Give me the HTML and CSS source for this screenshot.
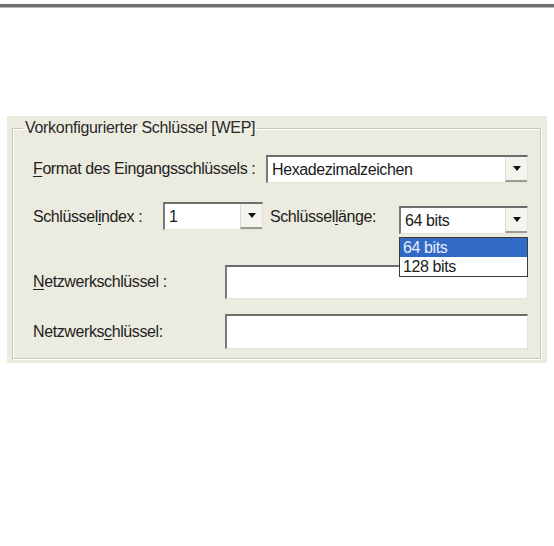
FILE: index.html
```html
<!DOCTYPE html>
<html>
<head>
    <meta charset="UTF-8">
    <title>WEP-Schlüssel</title>
    <link rel="stylesheet" href="styles.css">
</head>
<body>
    <div class="topline"></div>
    <div class="panel">
        <fieldset class="group">
            <legend>Vorkonfigurierter Schlüssel [WEP]</legend>

            <div class="row row-format">
                <label class="lbl lbl-format"><u>F</u>ormat des Eingangsschlüssels :</label>
                <div class="combo combo-format">
                    <span class="val">Hexadezimalzeichen</span>
                    <span class="arrow"></span>
                </div>
            </div>

            <div class="row row-keys">
                <label class="lbl lbl-index">Schlüssel<u>i</u>ndex :</label>
                <div class="combo combo-index">
                    <span class="val">1</span>
                    <span class="arrow"></span>
                </div>
                <label class="lbl lbl-len">Schlüssel<u>l</u>änge:</label>
                <div class="combo combo-len">
                    <span class="val">64 bits</span>
                    <span class="arrow"></span>
                    <ul class="droplist">
                        <li class="sel">64 bits</li>
                        <li>128 bits</li>
                    </ul>
                </div>
            </div>

            <div class="row row-key1">
                <label class="lbl lbl-key"><u>N</u>etzwerkschlüssel :</label>
                <div class="field"></div>
            </div>

            <div class="row row-key2">
                <label class="lbl lbl-key">Netzwerks<u>c</u>hlüssel:</label>
                <div class="field"></div>
            </div>
        </fieldset>
    </div>
</body>
</html>
```

FILE: styles.css
```css
body { background: #fff; margin: 0; font-family: "Liberation Sans", Arial, sans-serif; color: #222; }

.topline { height: 3px; margin-top: 4px; background: #6f6f6f; border-bottom: 1px solid #b5b5b5; }

.panel {
    background: #ecebdf;
    margin: 108px 7px 0 7px;
    padding: 4px 6px 4px 5px;
}

/* etched group frame */
.group {
    margin: 0;
    padding: 19px 12px 9px 20px;
    border: 1px solid #c9c7b7;
    box-shadow: inset 1px 1px 0 #fff, 1px 1px 0 #fff;
}
.group legend {
    font-size: 16px; line-height: 16px; letter-spacing: -0.3px;
    padding: 0 2px; margin-left: -10px; color: #2a2a2a;
}

.row { display: flex; align-items: center; }
.row-keys { margin-top: 19px; align-items: flex-start; }
.row-key1 { margin-top: 31px; }
.row-key2 { margin-top: 15px; }

.lbl { font-size: 16px; letter-spacing: -0.4px; white-space: nowrap; flex: none; }
.lbl u { text-decoration-thickness: 1px; text-underline-offset: 2px; }
.lbl-format { width: 233px; }
.lbl-index { width: 130px; margin-top: 6px; }
.lbl-len { width: 129px; margin-left: 7px; margin-top: 6px; }
.lbl-key { width: 192px; }

/* sunken 3d edge used by combos and text fields */
.combo, .field {
    box-sizing: border-box;
    background: #fff;
    border-top: 2px solid #6d6d6d;
    border-left: 2px solid #7a7a7a;
    border-right: 1px solid #e4e3d8;
    border-bottom: 1px solid #e4e3d8;
}

.combo {
    position: relative;
    display: flex; align-items: center;
    height: 28px;
}
.combo .val { flex: 1; padding-left: 4px; font-size: 16px; letter-spacing: -0.4px; color: #1a1a1a; }
.combo .arrow {
    width: 22px; height: 100%;
    box-sizing: border-box;
    border-left: 1px solid #dcdbd0;
    border-bottom: 2px solid #9d9c92;
    background: #f4f3ee;
    display: flex; align-items: center; justify-content: center;
}
.combo .arrow::after {
    content: "";
    border-left: 4px solid transparent;
    border-right: 4px solid transparent;
    border-top: 5px solid #111;
}
.combo-format { flex: 1; }
.combo-index { width: 100px; }
.combo-len { width: 129px; margin-top: 4px; }

.droplist {
    position: absolute; left: -2px; right: -1px; top: calc(100% + 4px);
    margin: 0; padding: 0; list-style: none;
    background: #fff;
    border: 1px solid #3a3a3a;
}
.droplist li { height: 19px; line-height: 19px; padding-left: 3px; font-size: 16px; letter-spacing: -0.4px; }
.droplist li.sel { background: #316ac5; color: #e8eeff; }

.field { flex: 1; height: 34px; }
.row-key2 .field { height: 35px; }
```
